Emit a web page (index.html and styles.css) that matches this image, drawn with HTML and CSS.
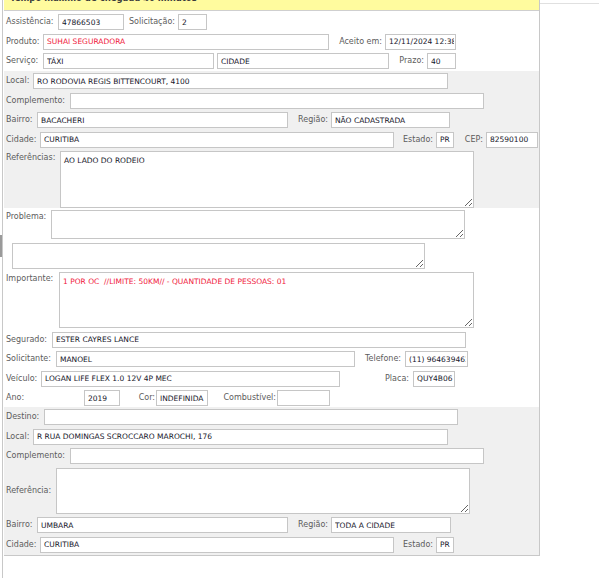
FILE: index.html
```html
<!DOCTYPE html>
<html lang="pt-BR">
<head>
<meta charset="utf-8">
<title>Atendimento</title>
<link rel="stylesheet" href="styles.css">
</head>
<body>
<div class="grip-mark"></div>
<div class="shell">
  <div class="panel">
    <div class="banner"><span class="banner-text">Tempo máximo de chegada 40 minutos</span></div>

    <section class="sec sec-white sec-top">
      <div class="row">
        <label class="lbl" style="width:52px">Assistência:</label>
        <input class="fld" style="width:66px" value="47866503" readonly>
        <label class="lbl r" style="width:54px">Solicitação:</label>
        <input class="fld" style="width:29px" value="2" readonly>
      </div>
      <div class="row">
        <label class="lbl" style="width:37px">Produto:</label>
        <input class="fld red" style="width:286px" value="SUHAI SEGURADORA" readonly>
        <label class="lbl r" style="width:56px">Aceito em:</label>
        <input class="fld" style="width:71px" value="12/11/2024 12:38" readonly>
      </div>
      <div class="row">
        <label class="lbl" style="width:37px">Serviço:</label>
        <input class="fld" style="width:171px" value="TÁXI" readonly>
        <input class="fld gap3" style="width:172px" value="CIDADE" readonly>
        <label class="lbl r" style="width:38px">Prazo:</label>
        <input class="fld" style="width:29px" value="40" readonly>
      </div>
    </section>

    <section class="sec sec-gray sec-local">
      <div class="row">
        <label class="lbl" style="width:27px">Local:</label>
        <input class="fld" style="width:415px" value="RO RODOVIA REGIS BITTENCOURT, 4100" readonly>
      </div>
      <div class="row">
        <label class="lbl" style="width:64px">Complemento:</label>
        <input class="fld" style="width:414px" value="" readonly>
      </div>
      <div class="row">
        <label class="lbl" style="width:31px">Bairro:</label>
        <input class="fld" style="width:251px" value="BACACHERI" readonly>
        <label class="lbl r" style="width:43px">Região:</label>
        <input class="fld" style="width:119px" value="NÃO CADASTRADA" readonly>
      </div>
      <div class="row">
        <label class="lbl" style="width:34px">Cidade:</label>
        <input class="fld" style="width:354px" value="CURITIBA" readonly>
        <label class="lbl r" style="width:42px">Estado:</label>
        <input class="fld" style="width:18px" value="PR" readonly>
        <label class="lbl r" style="width:32px">CEP:</label>
        <input class="fld" style="width:52px" value="82590100" readonly>
      </div>
      <div class="row row-area">
        <label class="lbl top" style="width:54px">Referências:</label>
        <textarea class="area" style="width:414px;height:57px" readonly>AO LADO DO RODEIO</textarea>
      </div>
    </section>

    <section class="sec sec-white sec-mid">
      <div class="row row-area">
        <label class="lbl top" style="width:45px">Problema:</label>
        <textarea class="area" style="width:414px;height:29px" readonly></textarea>
      </div>
      <div class="row row-area">
        <textarea class="area indent" style="width:413px;height:26px" readonly></textarea>
      </div>
      <div class="row row-area">
        <label class="lbl top" style="width:53px">Importante:</label>
        <textarea class="area red" style="width:415px;height:56px" readonly>1 POR OC  //LIMITE: 50KM// - QUANTIDADE DE PESSOAS: 01</textarea>
      </div>
      <div class="row">
        <label class="lbl" style="width:46px">Segurado:</label>
        <input class="fld" style="width:414px" value="ESTER CAYRES LANCE" readonly>
      </div>
      <div class="row">
        <label class="lbl" style="width:50px">Solicitante:</label>
        <input class="fld" style="width:299px" value="MANOEL" readonly>
        <label class="lbl r r4" style="width:50px">Telefone:</label>
        <input class="fld" style="width:63px" value="(11) 964639463" readonly>
      </div>
      <div class="row">
        <label class="lbl" style="width:35px">Veículo:</label>
        <input class="fld" style="width:299px" value="LOGAN LIFE FLEX 1.0 12V 4P MEC" readonly>
        <label class="lbl r r4" style="width:73px">Placa:</label>
        <input class="fld" style="width:42px" value="QUY4B06" readonly>
      </div>
      <div class="row">
        <label class="lbl" style="width:78px">Ano:</label>
        <input class="fld" style="width:36px" value="2019" readonly>
        <label class="lbl r tight" style="width:36px">Cor:</label>
        <input class="fld" style="width:52px" value="INDEFINIDA" readonly>
        <label class="lbl r tight" style="width:69px">Combustível:</label>
        <input class="fld" style="width:53px" value="" readonly>
      </div>
    </section>

    <section class="sec sec-gray sec-dest">
      <div class="row">
        <label class="lbl" style="width:38px">Destino:</label>
        <input class="fld" style="width:414px" value="" readonly>
      </div>
      <div class="row">
        <label class="lbl" style="width:27px">Local:</label>
        <input class="fld" style="width:415px" value="R RUA DOMINGAS SCROCCARO MAROCHI, 176" readonly>
      </div>
      <div class="row">
        <label class="lbl" style="width:64px">Complemento:</label>
        <input class="fld" style="width:414px" value="" readonly>
      </div>
      <div class="row row-area">
        <label class="lbl" style="width:50px">Referência:</label>
        <textarea class="area" style="width:414px;height:46px" readonly></textarea>
      </div>
      <div class="row">
        <label class="lbl" style="width:31px">Bairro:</label>
        <input class="fld" style="width:251px" value="UMBARA" readonly>
        <label class="lbl r" style="width:43px">Região:</label>
        <input class="fld" style="width:120px" value="TODA A CIDADE" readonly>
      </div>
      <div class="row">
        <label class="lbl" style="width:34px">Cidade:</label>
        <input class="fld" style="width:354px" value="CURITIBA" readonly>
        <label class="lbl r" style="width:42px">Estado:</label>
        <input class="fld" style="width:18px" value="PR" readonly>
      </div>
    </section>
  </div>
  <div class="filler"></div>
</div>
</body>
</html>
```

FILE: styles.css
```css
html, body {
  margin: 0;
  padding: 0;
  background: #ffffff;
}

body {
  font-family: "DejaVu Sans", Verdana, sans-serif;
  position: relative;
  min-height: 578px;
}

.grip-mark {
  position: absolute;
  left: 0;
  top: 235px;
  width: 2px;
  height: 22px;
  background: #9a9a9a;
}

.shell {
  margin-left: 2px;
  border-left: 1px solid #c8c8c8;
  min-height: 578px;
  display: flex;
  align-items: flex-start;
}

.panel {
  margin-left: 1px;
  width: 535px;
  border-right: 1px solid #c8c8c8;
  border-bottom: 1px solid #c8c8c8;
  background: #ffffff;
  flex: none;
}

.filler {
  flex: 1;
  margin-top: 3px;
  border-top: 1px solid #e0e0e0;
}

.banner {
  height: 10px;
  background: #fffb9e;
  border-bottom: 1px solid #cfcfcf;
  overflow: hidden;
  position: relative;
}

.banner-text {
  display: block;
  margin-left: 6px;
  margin-top: -7px;
  font-size: 8.5px;
  line-height: 10px;
  font-weight: bold;
  color: #3a3a3a;
  white-space: nowrap;
}

.sec {
  display: flex;
  flex-direction: column;
  gap: 3.5px;
  padding-left: 2px;
}

.sec-white { background: #ffffff; }
.sec-gray { background: #f0f0f0; }

.sec-top { padding-top: 3px; padding-bottom: 2px; }
.sec-local { padding-top: 2px; padding-bottom: 0; }
.sec-mid { padding-top: 2px; padding-bottom: 1px; }
.sec-dest { padding-top: 2px; padding-bottom: 2px; }

.row {
  display: flex;
  align-items: center;
  height: 16px;
}

.row-area {
  height: auto;
  align-items: center;
}

.lbl {
  flex: none;
  box-sizing: border-box;
  font-size: 8px;
  line-height: 16px;
  color: #5c5c5c;
  white-space: nowrap;
  overflow: visible;
}

.lbl.r {
  text-align: right;
  padding-right: 3px;
}

.lbl.r4 { padding-right: 4px; }
.lbl.tight { padding-right: 1px; }

.lbl.top {
  align-self: flex-start;
  line-height: 12px;
  padding-top: 1px;
}

.fld {
  flex: none;
  box-sizing: border-box;
  height: 16px;
  margin: 0;
  padding: 0 1px 0 3px;
  border: 1px solid #c6c6c6;
  border-radius: 0;
  background: #ffffff;
  font-family: "DejaVu Sans", Verdana, sans-serif;
  font-size: 7.5px;
  color: #16162a;
  outline: none;
}

.gap3 { margin-left: 3px; }

.area {
  flex: none;
  box-sizing: border-box;
  margin: 0;
  padding: 4px 3px;
  border: 1px solid #c6c6c6;
  border-radius: 0;
  background: #ffffff;
  font-family: "DejaVu Sans", Verdana, sans-serif;
  font-size: 7.5px;
  line-height: 10px;
  color: #16162a;
  outline: none;
  resize: both;
}

.indent { margin-left: 6px; }

.red { color: #f0203c; }
```
